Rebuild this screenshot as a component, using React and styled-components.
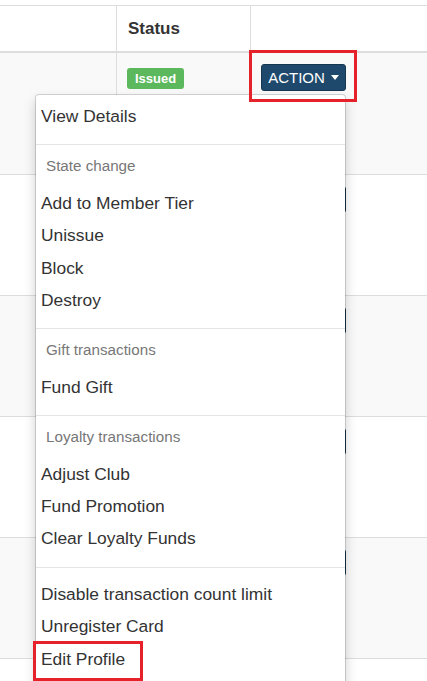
import React from 'react';
import styled, { createGlobalStyle } from 'styled-components';

const GlobalStyle = createGlobalStyle`
  body {
    margin: 0;
    background: #fff;
    font-family: 'Liberation Sans', Arial, Helvetica, sans-serif;
    color: #333;
    overflow: hidden;
  }
`;

const Page = styled.div`
  position: relative;
  width: 427px;
  height: 681px;
  overflow: hidden;
  padding-top: 5px;
  box-sizing: border-box;
`;

const HeaderRow = styled.div`
  display: grid;
  grid-template-columns: 116px 134px 1fr;
  height: 48px;
  box-sizing: border-box;
  border-top: 1px solid #ddd;
  border-bottom: 2px solid #ddd;
`;

const HeadCell = styled.div`
  display: flex;
  align-items: center;
  padding: 0 11px;
  font-size: 17px;
  font-weight: bold;
  color: #333;
  border-left: ${p => (p.first ? 'none' : '1px solid #ddd')};
`;

const BodyRow = styled.div`
  display: grid;
  grid-template-columns: 116px 134px 1fr;
  height: 121px;
  box-sizing: border-box;
  background: ${p => (p.striped ? '#f9f9f9' : '#fff')};
  border-top: ${p => (p.first ? 'none' : '1px solid #ddd')};
`;

const Cell = styled.div`
  padding: 11px 10px;
  border-left: ${p => (p.first ? 'none' : '1px solid #ddd')};
`;

const Badge = styled.span`
  display: inline-block;
  margin-top: 4px;
  padding: 0 8px;
  height: 21px;
  line-height: 21px;
  border-radius: 3px;
  background: #5cb85c;
  color: #fff;
  font-size: 13px;
  font-weight: bold;
`;

const ActionButton = styled.button`
  display: inline-flex;
  align-items: center;
  justify-content: center;
  gap: 6px;
  width: 85px;
  height: 27px;
  padding: 0;
  box-sizing: border-box;
  border: 1px solid #163750;
  border-radius: 3px;
  background: #1f496c;
  color: #fff;
  font-family: 'Liberation Sans', Arial, sans-serif;
  font-size: 15px;
  cursor: pointer;
`;

const Caret = styled.span`
  width: 0;
  height: 0;
  border-top: 5px solid #fff;
  border-left: 4px solid transparent;
  border-right: 4px solid transparent;
`;

const Menu = styled.div`
  position: absolute;
  left: 35px;
  top: 94px;
  width: 311px;
  height: 620px;
  box-sizing: border-box;
  padding-top: 5px;
  background: #fff;
  background-clip: padding-box;
  border: 1px solid rgba(0, 0, 0, 0.15);
  border-radius: 4px;
  box-shadow: 0 6px 12px rgba(0, 0, 0, 0.175);
  z-index: 10;
`;

const Group = styled.div`
  padding-top: ${p => (p.spaced ? '4.4px' : '0')};
`;

const Item = styled.div`
  padding: 0 5px;
  line-height: 32.3px;
  font-size: 17.4px;
  color: #333;
  white-space: nowrap;
`;

const GroupTitle = styled.div`
  padding: 3.5px 10px 11.2px;
  line-height: 21px;
  font-size: 15.2px;
  color: #777;
`;

const Divider = styled.div`
  height: 1px;
  margin: 12px 0 6px;
  background: #e5e5e5;
`;

const Highlight = styled.div`
  position: absolute;
  left: ${p => p.x}px;
  top: ${p => p.y}px;
  width: ${p => p.w}px;
  height: ${p => p.h}px;
  box-sizing: border-box;
  border: 3px solid #e5222a;
  z-index: 20;
  pointer-events: none;
`;

const groups = [
  { items: ['View Details'] },
  { title: 'State change', items: ['Add to Member Tier', 'Unissue', 'Block', 'Destroy'] },
  { title: 'Gift transactions', items: ['Fund Gift'] },
  { title: 'Loyalty transactions', items: ['Adjust Club', 'Fund Promotion', 'Clear Loyalty Funds'] },
  { items: ['Disable transaction count limit', 'Unregister Card', 'Edit Profile'], spaced: true },
];

// only the first row's status shows, the rest sit under the open menu
const rows = [
  { status: 'Issued', action: true },
  { action: true },
  { action: true },
  { action: true },
  { action: true },
  {},
];

function App() {
  return (
    <Page>
      <GlobalStyle />
      <HeaderRow>
        <HeadCell first></HeadCell>
        <HeadCell>Status</HeadCell>
        <HeadCell></HeadCell>
      </HeaderRow>
      {rows.map((row, i) => (
        <BodyRow key={i} first={i === 0} striped={i % 2 === 0}>
          <Cell first></Cell>
          <Cell>{row.status && <Badge>{row.status}</Badge>}</Cell>
          <Cell>
            {row.action && (
              <ActionButton>
                ACTION <Caret />
              </ActionButton>
            )}
          </Cell>
        </BodyRow>
      ))}

      <Menu>
        {groups.map((g, gi) => (
          <React.Fragment key={gi}>
            {gi > 0 && <Divider />}
            <Group spaced={g.spaced}>
              {g.title && <GroupTitle>{g.title}</GroupTitle>}
              {g.items.map(label => (
                <Item key={label}>{label}</Item>
              ))}
            </Group>
          </React.Fragment>
        ))}
      </Menu>

      <Highlight x={249} y={50} w={108} h={52} />
      <Highlight x={33} y={641} w={110} h={40} />
    </Page>
  );
}

export default App;
